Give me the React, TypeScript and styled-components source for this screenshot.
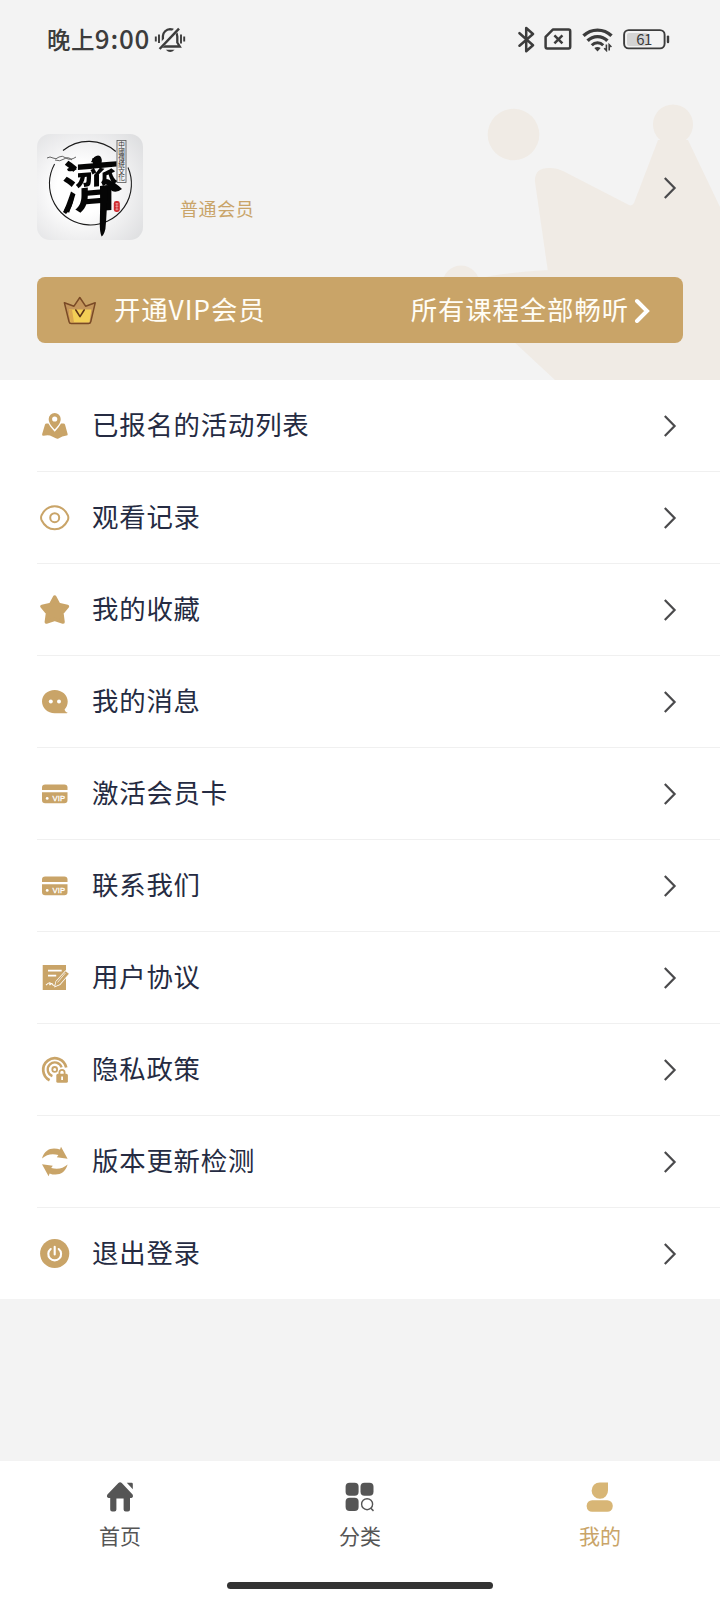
import React from "react";
import styled, { createGlobalStyle } from "styled-components";

const GOLD = "#c9a468";
const cjk = `"Noto Sans CJK SC", "Noto Sans", sans-serif`;

const GlobalStyle = createGlobalStyle`
  * { box-sizing: border-box; }
  body { margin: 0; background: #f3f3f3; font-family: ${cjk}; }
  svg { display: block; flex: none; }
`;

const Screen = styled.div`
  width: 720px;
  height: 1600px;
  display: flex;
  flex-direction: column;
  background: #f3f3f3;
  overflow: hidden;
`;

const Header = styled.header`
  position: relative;
  height: 380px;
  flex: none;
  display: flex;
  flex-direction: column;
`;

const CrownBackdrop = styled.svg`
  position: absolute;
  right: 0;
  bottom: 0;
`;

const StatusBar = styled.div`
  position: relative;
  height: 80px;
  padding: 0 50px 2px 47px;
  display: flex;
  align-items: center;
`;

const Clock = styled.div`
  display: flex;
  align-items: baseline;
  color: #3c3c3c;
  font-size: 23.5px;
  font-weight: 500;
  line-height: 36px;
  letter-spacing: 0.4px;
  margin-right: 4px;
  padding-bottom: 2px;
`;

const Digits = styled.span`
  font-size: 26px;
  letter-spacing: 0.8px;
`;

const StatusIcons = styled.div`
  margin-left: auto;
  display: flex;
  align-items: center;
  gap: 9.5px;
`;

const Profile = styled.div`
  position: relative;
  margin: 54px 37px 0;
  height: 106px;
  display: flex;
`;

const Avatar = styled.div`
  width: 106px;
  height: 106px;
  border-radius: 13px;
  overflow: hidden;
  background: radial-gradient(circle at 42% 52%, #fff 30%, #f0f0f1 58%, #dadbdd 100%);
`;

const MemberLevel = styled.div`
  margin: 61px 0 0 37px;
  font-size: 18px;
  letter-spacing: 0.6px;
  line-height: 26px;
  color: ${GOLD};
`;

const ProfileArrow = styled.div`
  margin: 42px 6px 0 auto;
`;

const VipBanner = styled.div`
  position: relative;
  margin: 37px 37px 0;
  height: 66px;
  padding: 0 32px 0 25px;
  display: flex;
  align-items: center;
  border-radius: 8px;
  background: ${GOLD};
  color: #fffdf6;
  font-size: 26.4px;
  letter-spacing: 0.9px;
`;

const BannerTitle = styled.span`
  margin-left: 16px;
  padding-bottom: 4px;
  flex: 1;
`;

const BannerHint = styled.span`
  padding-bottom: 4px;
  margin-right: 4px;
`;

const Menu = styled.main`
  flex: none;
  background: #fff;
  padding-left: 37px;
`;

const MenuRow = styled.div<{ $last?: boolean }>`
  height: ${(p) => (p.$last ? 91 : 92)}px;
  border-bottom: ${(p) => (p.$last ? 0 : 1)}px solid #f0f0f0;
  padding-right: 43px;
  display: flex;
  align-items: center;
`;

const MenuLabel = styled.span`
  flex: 1;
  margin-left: 19px;
  padding-bottom: 3px;
  color: #252b42;
  font-size: 26.4px;
  letter-spacing: 0.8px;
  line-height: 40px;
`;

const TabBar = styled.footer`
  margin-top: auto;
  height: 139px;
  background: #fff;
  display: flex;
  flex-direction: column;
  align-items: center;
`;

const Tabs = styled.nav`
  width: 100%;
  height: 121px;
  display: grid;
  grid-template-columns: repeat(3, 1fr);
`;

const Tab = styled.div<{ $active?: boolean }>`
  display: flex;
  flex-direction: column;
  align-items: center;
  padding-top: 20px;
  font-size: 21px;
  line-height: 32px;
  color: ${(p) => (p.$active ? GOLD : "#555")};
`;

const TabLabel = styled.span`
  margin-top: 6px;
`;

const HomeIndicator = styled.div`
  width: 266px;
  height: 7px;
  border-radius: 4px;
  background: #333;
`;

const Chevron = () => (
  <svg width="14" height="24" viewBox="0 0 14 24" fill="none" stroke="#4a4a4c" strokeWidth="2.2">
    <path d="M1.800 2 L11.6 12 L1.800 22" />
  </svg>
);

const RowIcon = ({ children }: { children: React.ReactNode }) => (
  <svg width="36" height="36" viewBox="0 0 36 36" fill={GOLD}>
    {children}
  </svg>
);

const mapIcon = (
  <RowIcon>
    <path d="M9.500 15.5H26.5Q27.6 15.5 28 16.6L30.7 26.2Q30.8 27.4 29.6 27.6Q25 28 21.5 30.4Q20.2 31 18.8 30.3L13 27.6Q10.5 27 6.5 27.8Q4.8 27.8 5.1 26.2L8 16.6Q8.4 15.5 9.5 15.5Z" />
    <path
      d="M17.7 21.6C14.500 18 11.7 14.800 11.7 10.9A6 6 0 0 1 23.7 10.9C23.7 14.800 20.9 18 17.7 21.6Z"
      stroke="#fff"
      strokeWidth="3"
      paintOrder="stroke"
    />
    <circle cx="17.7" cy="11" r="2.6" fill="#fff" />
  </RowIcon>
);

const eyeIcon = (
  <RowIcon>
    <g fill="none" stroke={GOLD} strokeWidth="2">
      <path d="M4.6 15.2C7.6 9.2 12 6.200 17.7 6.200S27.8 9.2 30.800 15.2Q31.900 17.7 30.800 20.2C27.8 26.2 23.400 29.2 17.7 29.2S7.6 26.2 4.6 20.2Q3.500 17.7 4.6 15.2Z" />
      <circle cx="17.7" cy="17.7" r="4.5" />
    </g>
  </RowIcon>
);

const starIcon = (
  <RowIcon>
    <path
      d="M17.7 5.200L21.6 12.400L30.4 14.400L24.8 21L26 30L17.7 27.400L9.4 30L10.6 21L5 14.400L13.800 12.400Z"
      stroke={GOLD}
      strokeWidth="3.6"
      strokeLinejoin="round"
    />
  </RowIcon>
);

const messageIcon = (
  <RowIcon>
    <path d="M17.7 6C24.9 6 30.7 11 30.7 17.5C30.7 20.7 29.6 23.4 27.6 25.4C27.8 27 29 28 30.4 28.5C30.8 29 30 29.2 29.4 29.2H17.7C10.5 29.2 5 24 5 17.5S10.5 6 17.7 6Z" />
    <circle cx="13.8" cy="17.6" r="2" fill="#fff" />
    <circle cx="22" cy="17.6" r="2" fill="#fff" />
  </RowIcon>
);

const cardIcon = (
  <RowIcon>
    <path d="M8.2 8.4H27.3Q30.5 8.4 30.5 11.6V14H5V11.6Q5 8.4 8.2 8.4Z" />
    <path d="M5 16.3H30.5V24Q30.5 27.2 27.3 27.2H8.2Q5 27.2 5 24Z" />
    <circle cx="10.2" cy="22.4" r="1.4" fill="#fff" />
    <text x="15.4" y="24.800" fontSize="7.6" fill="#fff" stroke="#fff" strokeWidth="0.3" textLength="12.8" fontFamily="Liberation Sans, sans-serif">
      VIP
    </text>
  </RowIcon>
);

const agreementIcon = (
  <RowIcon>
    <path d="M5.7 5H29V30H5.7Z" />
    <g fill="none" stroke="#fff" strokeWidth="1.7">
      <path d="M11 10.7H24.7M11 15.7H19.2" />
      <path d="M9 25.2Q11.6 22.4 13 22.8Q13.3 23.5 12.6 25Q15 22.6 15.5 24.4Q16 25.8 17.6 25" strokeWidth="1.1" />
    </g>
    <path d="M28.6 11.2L31.9 13.700L22.8 24.3L18.2 26.2L19.2 21.6Z" stroke="#fff" strokeWidth="1.5" paintOrder="stroke" />
    <path d="M28.400 13L20.600 22.400" stroke="#fff" strokeWidth="0.7" />
  </RowIcon>
);

const privacyIcon = (
  <RowIcon>
    <g fill="none" stroke={GOLD} strokeWidth="2.7">
      <path d="M12.6 28.2A11.6 11.6 0 1 1 29.2 15.6" />
      <path d="M15.4 24.2A7.1 7.1 0 1 1 24.6 15.4" strokeWidth="2.3" />
    </g>
    <circle cx="17.7" cy="17.4" r="2.4" fill="none" stroke={GOLD} strokeWidth="1.8" />
    <path d="M22.4 23V20.4A2.6 2.6 0 0 1 27.6 20.4V23" fill="none" stroke={GOLD} strokeWidth="1.8" />
    <rect x="19.3" y="21.8" width="11.6" height="9" rx="1.6" />
    <path d="M25.1 24.6V28" stroke="#fff" strokeWidth="1.8" />
  </RowIcon>
);

const arrowPath = "M5 14.400C7 7.400 11.6 4.400 17 4.400Q20.3 4.400 23 5.6L24 2.8L30.6 14.8L19.8 13.3L21.400 11C15 9.200 9.6 10.4 5 14.400Z";

const updateIcon = (
  <RowIcon>
    <path d={arrowPath} />
    <path d={arrowPath} transform="rotate(180 17.8 17.5)" />
  </RowIcon>
);

const logoutIcon = (
  <RowIcon>
    <circle cx="17.7" cy="17.5" r="14.6" />
    <path
      d="M17.7 10.8V18.4M13.7 13A6.4 6.4 0 1 0 21.7 13"
      fill="none"
      stroke="#fff"
      strokeWidth="2.1"
      strokeLinecap="round"
    />
  </RowIcon>
);

const menuItems = [
  { label: "已报名的活动列表", icon: mapIcon },
  { label: "观看记录", icon: eyeIcon },
  { label: "我的收藏", icon: starIcon },
  { label: "我的消息", icon: messageIcon },
  { label: "激活会员卡", icon: cardIcon },
  { label: "联系我们", icon: cardIcon },
  { label: "用户协议", icon: agreementIcon },
  { label: "隐私政策", icon: privacyIcon },
  { label: "版本更新检测", icon: updateIcon },
  { label: "退出登录", icon: logoutIcon },
];

const MutedBell = () => (
  <svg width="32" height="28" viewBox="0 0 32 28" fill="none" stroke="#3c3c3c" strokeWidth="2.3">
    <path d="M7.5 21.5H25.8L23.3 17.5V11.5A7.3 7.3 0 0 0 16 4.2A7.3 7.3 0 0 0 8.9 11V17L7.2 20" />
    <path d="M5 22.6L24 3.2" stroke="#f3f3f3" strokeWidth="5" />
    <path d="M5.6 24L25 3.6" strokeWidth="2.5" />
    <path d="M11.800 24.800H20.600Q16.2 29.400 11.800 24.800Z" fill="#3c3c3c" stroke="none" />
    <path d="M1.8 11.500V16.5M5 9.500V18M27 9.5V18.5M30.2 11.5V16.5" strokeWidth="1.9" />
  </svg>
);

const Bluetooth = () => (
  <svg width="17" height="27" viewBox="0 0 17 27" fill="none" stroke="#3c3c3c" strokeWidth="2.5" strokeLinejoin="round" strokeLinecap="round">
    <path d="M1.5 7.2L15 19.2L8.2 25.2V2L15 8L1.5 19.8" />
  </svg>
);

const SimIcon = () => (
  <svg width="28" height="22" viewBox="0 0 28 22" fill="none" stroke="#3c3c3c" strokeWidth="2.5" strokeLinejoin="round">
    <path d="M8.8 1.6H24.6Q26.2 1.6 26.2 3.2V18.8Q26.2 20.4 24.6 20.4H3.2Q1.6 20.4 1.6 18.8V8.8Z" />
    <path d="M10.4 7.4L18.4 15.4M18.4 7.4L10.4 15.4" />
  </svg>
);

const Wifi = () => (
  <svg width="32" height="25" viewBox="0 0 32 25" fill="none" stroke="#3c3c3c" strokeWidth="3.4">
    <path d="M1.5 8.8A20 20 0 0 1 29.5 8.8" />
    <path d="M5.600 13.8A13.8 13.8 0 0 1 25.4 13.8" />
    <path d="M9.800 18.2A8 8 0 0 1 21.200 18.2" strokeWidth="3" />
    <path d="M12.3 21Q15.5 18.800 18.7 21L15.5 24.4Z" fill="#3c3c3c" stroke="none" />
    <path d="M24.400 17.6V23.4L22.2 21.200M27.2 23.6V17.8L29.4 20" strokeWidth="1.6" />
  </svg>
);

const Battery = () => (
  <svg width="47" height="21" viewBox="0 0 47 21" fill="none">
    <rect x="4" y="4" width="21" height="13" rx="2" fill="#d4d4d4" />
    <rect x="1.1" y="1.1" width="40.5" height="18.3" rx="4.6" stroke="#3c3c3c" strokeWidth="1.9" />
    <path d="M45 7.600V13" stroke="#3c3c3c" strokeWidth="2.4" strokeLinecap="round" />
    <text x="21" y="16" textAnchor="middle" fontSize="15" fill="#3c3c3c" fontFamily={cjk} letterSpacing="-0.7">
      61
    </text>
  </svg>
);

const AvatarLogo = () => (
  <svg width="106" height="106" viewBox="0 0 106 106">
    <g fill="none" stroke="#1c1c1c" strokeWidth="1.1">
      <path d="M26 16.5A41 41 0 0 1 78.8 17.5" />
      <path d="M91 33.5A41 41 0 1 1 17.6 30" />
      <path d="M10 24q3-2 6 0t6-1q3-2 7 1t10-1M18 26q5 2 9-1t8 1" stroke="#555" strokeWidth="0.9" />
      <rect x="80" y="6.5" width="9" height="42" stroke="#555" strokeWidth="0.8" />
    </g>
    <text
      x="84.5"
      y="7.6"
      fill="#333"
      fontSize="6.6"
      fontFamily={`"Noto Sans CJK TC", sans-serif`}
      style={{ writingMode: "vertical-rl" }}
    >
      中國傳統文化
    </text>
    <text
      transform="translate(25 75) skewY(-5)"
      fontSize="57"
      fontWeight="700"
      fill="#050505"
      fontFamily={`"Noto Sans CJK TC", sans-serif`}
    >
      濟
    </text>
    <path d="M63 52L70.400 51Q70 80 68.4 95Q67 101 64.6 102.5Q62.6 98 62.8 89Q63.4 72 63 52Z" fill="#050505" />
    <path d="M54 28Q58 20 63 22Q66 25 64 31ZM30 35Q36 31 40 35Q37 38 31 37ZM70 45Q78 48 85 55Q80 59 75 57Q70 52 66 46ZM26 78Q31 68 37 62Q36 74 29 80Z" fill="#050505" />
    <rect x="76.8" y="67" width="6" height="11" rx="2.4" fill="#cf2a2f" />
    <path d="M78.4 69.8H81.400M78.4 72.3H81.400M78.4 75.2H81.400M79.9 69V76.400" stroke="#f6c9c9" strokeWidth="0.6" />
  </svg>
);

const BannerCrown = () => (
  <svg width="36" height="36" viewBox="0 0 36 36" strokeLinejoin="round" strokeLinecap="round">
    <path d="M2.4 10.8L12 14.2L17.8 5.5L23.6 14.2L33.2 10.8L28.8 29.6Q28.4 31.6 26.4 31.6H9.2Q7.4 31.6 7 29.6Z" fill="#c4965c" />
    <path d="M6.8 17.5H29.4L27.4 30.4H8.6Z" fill="#f3cf56" />
    <path d="M6.8 17.5H10L12 30.4H8.6Z" fill="#dba851" />
    <path
      d="M2.4 10.8L12 14.2L17.8 5.5L23.6 14.2L33.2 10.8L28.8 29.6Q28.4 31.6 26.4 31.6H9.2Q7.4 31.6 7 29.6Z"
      fill="none"
      stroke="#7a4a26"
      strokeWidth="1.5"
    />
    <path d="M13.8 18L18 24.6L22.2 18" fill="none" stroke="#5d3517" strokeWidth="1.6" />
  </svg>
);

const HomeIcon = () => (
  <svg width="32" height="32" viewBox="0 0 32 32" fill="#555">
    <path d="M14.4 2Q16.1.6 17.8 2L28.6 13.6Q29.8 16.6 27.4 17H26V28.4Q26 30.4 24 30.4H21.6Q19.6 30.4 19.6 28.4V17.4H12.4V28.4Q12.4 30.4 10.4 30.4H8.2Q6.2 30.4 6.2 28.4V17H4.6Q2 16.6 3.4 13.6Z" />
    <path d="M22.8 1.8H27.6Q28.8 1.8 28.8 3V8.2Z" />
  </svg>
);

const CategoryIcon = () => (
  <svg width="32" height="32" viewBox="0 0 32 32" fill="#555">
    <rect x="1.6" y="1.7" width="13" height="13" rx="4" />
    <rect x="16.5" y="1.7" width="13" height="13" rx="4" />
    <rect x="1.6" y="16.8" width="13" height="13.2" rx="4" />
    <circle cx="23.1" cy="23.2" r="5.5" fill="none" stroke="#555" strokeWidth="1.4" />
    <path d="M26.6 27L29.5 29.9" stroke="#555" strokeWidth="1.5" />
  </svg>
);

const MineIcon = () => (
  <svg width="32" height="32" viewBox="0 0 32 32" fill="#d8b676">
    <path d="M15.8 1.4H24V9.2A8.2 8.2 0 1 1 15.8 1.4Z" />
    <rect x="2.7" y="19.2" width="26" height="11.6" rx="5.4" />
  </svg>
);

export default function App() {
  return (
    <>
      <GlobalStyle />
      <Screen>
        <Header>
          <CrownBackdrop width="290" height="290" viewBox="0 0 290 290" fill="#f0ebe5">
            <circle cx="83.5" cy="44.5" r="25.8" />
            <circle cx="243" cy="34.5" r="20" />
            <circle cx="31" cy="194" r="18.5" />
            <path d="M118 182L105 92Q104 77 121 78Q127 78 133 81L199 115Q202 116.500 204 113L228 50H258L290 117V290H125L82 250L30 195Q50 184 118 180Z" />
          </CrownBackdrop>
          <StatusBar>
            <Clock>
              晚上<Digits>9:00</Digits>
            </Clock>
            <MutedBell />
            <StatusIcons>
              <Bluetooth />
              <SimIcon />
              <Wifi />
              <Battery />
            </StatusIcons>
          </StatusBar>
          <Profile>
            <Avatar>
              <AvatarLogo />
            </Avatar>
            <MemberLevel>普通会员</MemberLevel>
            <ProfileArrow>
              <Chevron />
            </ProfileArrow>
          </Profile>
          <VipBanner>
            <BannerCrown />
            <BannerTitle>开通VIP会员</BannerTitle>
            <BannerHint>所有课程全部畅听</BannerHint>
            <svg width="18" height="26" viewBox="0 0 18 26" fill="none" stroke="#fff" strokeWidth="4" strokeLinecap="round">
              <path d="M4 4L14 14L4 24" />
            </svg>
          </VipBanner>
        </Header>
        <Menu>
          {menuItems.map((item, i) => (
            <MenuRow key={item.label} $last={i === menuItems.length - 1}>
              {item.icon}
              <MenuLabel>{item.label}</MenuLabel>
              <Chevron />
            </MenuRow>
          ))}
        </Menu>
        <TabBar>
          <Tabs>
            <Tab>
              <HomeIcon />
              <TabLabel>首页</TabLabel>
            </Tab>
            <Tab>
              <CategoryIcon />
              <TabLabel>分类</TabLabel>
            </Tab>
            <Tab $active>
              <MineIcon />
              <TabLabel>我的</TabLabel>
            </Tab>
          </Tabs>
          <HomeIndicator />
        </TabBar>
      </Screen>
    </>
  );
}
